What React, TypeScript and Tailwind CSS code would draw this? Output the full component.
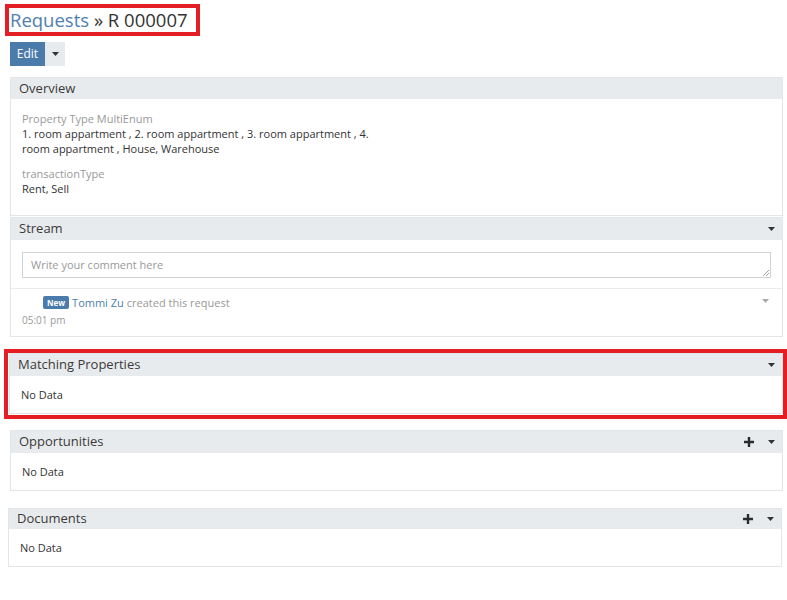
import React from "react";

const Caret = ({ className = "" }: { className?: string }) => (
  <svg width="7" height="4" viewBox="0 0 7 4" className={className}>
    <path d="M0 0h7L3.5 4z" fill="currentColor" />
  </svg>
);

const Plus = () => (
  <svg width="10" height="10" viewBox="0 0 10 10" className="text-[#2b2b2b]">
    <path d="M3.8 0h2.4v3.8H10v2.4H6.2V10H3.8V6.2H0V3.8h3.8z" fill="currentColor" />
  </svg>
);

function Panel({
  title,
  actions,
  children,
  headerClass = "h-[22px]",
}: {
  title: string;
  actions?: React.ReactNode;
  children: React.ReactNode;
  headerClass?: string;
}) {
  return (
    <div className="border border-[#e3e6e8] bg-white">
      <div className={`flex items-center justify-between bg-[#e8ebed] pl-[8px] pr-[7px] ${headerClass}`}>
        <span className="text-[13px] text-[#3a3a3a]">{title}</span>
        <div className="flex items-center gap-[14px]">{actions}</div>
      </div>
      {children}
    </div>
  );
}

function NoData() {
  return <div className="px-[11px] py-[11px] text-[11px] leading-[15px] text-[#333]">No Data</div>;
}

export default function App() {
  return (
    <div className="min-h-screen bg-white pl-[10px] pr-[4px] pt-[4px] font-['Open_Sans',sans-serif] text-[#333]">
      {/* Title (annotated) */}
      <div className="-ml-[5px] inline-block border-4 border-[#e31e24] pl-[1px] pr-[8px]">
        <h1 className="text-[18.5px] leading-[24px]">
          <span className="text-[#4f7fae]">Requests</span>
          <span className="text-[#333]"> » R 000007</span>
        </h1>
      </div>

      {/* Actions */}
      <div className="mt-[6px] flex">
        <button className="h-[24px] w-[35px] bg-[#4a7bab] text-[12px] text-white">Edit</button>
        <button className="flex h-[24px] w-[20px] items-center justify-center bg-[#e8ebed] text-[#333]">
          <Caret />
        </button>
      </div>

      {/* Overview */}
      <div className="mt-[11px]">
        <Panel title="Overview" headerClass="h-[21px]">
          <div className="px-[11px] pt-[12px] pb-[19px] text-[11px] leading-[15px]">
            <div className="w-[370px]">
              <div className="text-[#999]">Property Type MultiEnum</div>
              <div>1. room appartment , 2. room appartment , 3. room appartment , 4. room appartment , House, Warehouse</div>
            </div>
            <div className="mt-[10px]">
              <div className="text-[#999]">transactionType</div>
              <div>Rent, Sell</div>
            </div>
          </div>
        </Panel>
      </div>

      {/* Stream */}
      <div className="mt-[1px]">
        <Panel title="Stream" actions={<Caret className="text-[#333]" />}>
          <div className="px-[11px] pt-[12px] pb-[10px]">
            <div className="relative h-[26px] border border-[#cfd3d6] bg-white px-[8px] text-[11px] leading-[24px] text-[#999]">
              Write your comment here
              <svg width="7" height="7" viewBox="0 0 7 7" className="absolute bottom-[1px] right-[1px] text-[#888]">
                <path d="M7 1L1 7M7 4L4 7" stroke="currentColor" strokeWidth="0.8" />
              </svg>
            </div>
          </div>
          <div className="border-t border-[#e9ecee] px-[11px] pt-[6px] pb-[9px]">
            <div className="flex items-start justify-between">
              <div className="flex items-center pl-[21px] text-[11px] leading-[15px]">
                <span className="mr-[3px] rounded-[2px] bg-[#4a7bab] px-[4px] text-[8px] font-bold leading-[13px] text-white">
                  New
                </span>
                <span className="text-[#4f7fae]">Tommi Zu</span>
                <span className="ml-[3px] text-[#999]">created this request</span>
              </div>
              <Caret className="mt-[4px] mr-[2px] text-[#aaa]" />
            </div>
            <div className="mt-[3px] text-[10px] leading-[14px] text-[#999]">05:01 pm</div>
          </div>
        </Panel>
      </div>

      {/* Matching Properties (annotated) */}
      <div className="-ml-[6px] -mr-[4px] mt-[12px] border-4 border-[#e31e24] pb-[1px] pl-[1px] pr-0">
        <Panel title="Matching Properties" actions={<Caret className="text-[#333]" />}>
          <NoData />
        </Panel>
      </div>

      {/* Opportunities */}
      <div className="mt-[11px]">
        <Panel
          title="Opportunities"
          actions={
            <>
              <Plus />
              <Caret className="text-[#333]" />
            </>
          }
        >
          <NoData />
        </Panel>
      </div>

      {/* Documents */}
      <div className="-ml-[2px] mr-[1px] mt-[17px]">
        <Panel
          title="Documents"
          headerClass="h-[20px]"
          actions={
            <>
              <Plus />
              <Caret className="text-[#333]" />
            </>
          }
        >
          <NoData />
        </Panel>
      </div>
    </div>
  );
}
